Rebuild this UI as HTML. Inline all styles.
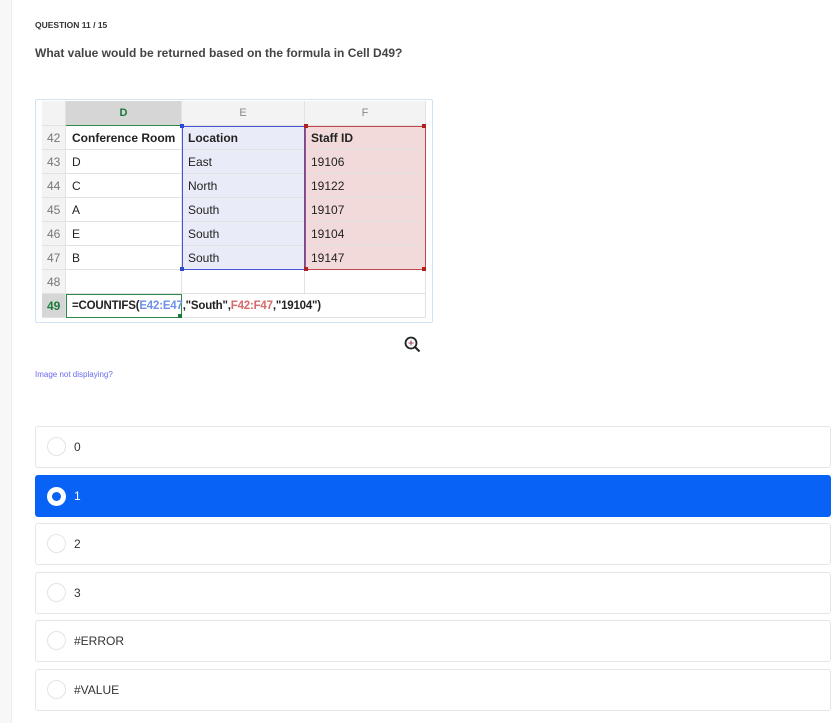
<!DOCTYPE html>
<html><head><style>
body{margin:0;width:840px;height:723px;background:#fff;font-family:"Liberation Sans",Arial,sans-serif;position:relative;overflow:hidden}
.strip{position:absolute;left:0;top:0;width:11px;height:723px;background:#f7f7f7;border-right:1px solid #ececec}
.a{position:absolute}
.q{left:35px;top:20px;font-size:8.5px;font-weight:bold;color:#333}
.t{left:35px;top:46px;font-size:12px;font-weight:bold;color:#444}
.img{left:35px;top:99px;width:396px;height:222px;border:1px solid #cfe3f5;border-radius:2px}
.ss{left:42px;top:101px;width:384px;height:217px;font-size:12px;color:#222}
.cell{position:absolute;box-sizing:border-box;border-right:1px solid #e2e2e2;border-bottom:1px solid #e2e2e2;padding-left:6px;line-height:25px}
.rn{color:#777;padding-left:5px;background:#f3f3f3}
.hd{background:#f3f3f3;color:#888;text-align:center;padding:0;font-size:11px;line-height:24px}
.opt{position:absolute;left:35px;width:794px;height:40px;border:1px solid #e6e6e6;border-radius:3px;box-sizing:content-box}
.opt .c{position:absolute;left:11px;top:10px;width:17px;height:17px;border:1px solid #e4e4e4;border-radius:50%}
.opt span{position:absolute;left:38px;top:13px;font-size:12px;color:#333}
.sel{background:#0862f6;border-color:#0862f6}
.sel .c{background:#fff;border:none;width:19px;height:19px;left:11px;top:11px}
.sel .c:after{content:"";position:absolute;left:5px;top:5px;width:9px;height:9px;border-radius:50%;background:#0862f6}
.sel span{color:#fff}
</style></head><body>
<div class="strip"></div>
<div class="a q">QUESTION 11 / 15</div>
<div class="a t">What value would be returned based on the formula in Cell D49?</div>
<div class="a img"></div>
<div class="a ss">
 <div class="cell hd" style="left:0;top:0;width:24px;height:25px"></div>
 <div class="cell hd" style="left:24px;top:0;width:116px;height:25px;background:#d6d6d6;color:#1a7a3a;font-weight:bold;border-bottom:1px solid #2a8a4a">D</div>
 <div class="cell hd" style="left:140px;top:0;width:123px;height:25px">E</div>
 <div class="cell hd" style="left:263px;top:0;width:121px;height:25px">F</div>
 <div class="a" style="left:140px;top:25px;width:123px;height:144px;background:#e9ecf8"></div>
 <div class="a" style="left:263px;top:25px;width:121px;height:144px;background:#f2dada"></div>
 <div class="cell rn" style="left:0;top:25px;width:24px;height:24px">42</div>
 <div class="cell" style="left:24px;top:25px;width:116px;height:24px;font-weight:bold">Conference Room</div>
 <div class="cell" style="left:140px;top:25px;width:123px;height:24px;font-weight:bold">Location</div>
 <div class="cell" style="left:263px;top:25px;width:121px;height:24px;font-weight:bold">Staff ID</div>
 <div class="cell rn" style="left:0;top:49px;width:24px;height:24px">43</div>
 <div class="cell" style="left:24px;top:49px;width:116px;height:24px">D</div>
 <div class="cell" style="left:140px;top:49px;width:123px;height:24px">East</div>
 <div class="cell" style="left:263px;top:49px;width:121px;height:24px">19106</div>
 <div class="cell rn" style="left:0;top:73px;width:24px;height:24px">44</div>
 <div class="cell" style="left:24px;top:73px;width:116px;height:24px">C</div>
 <div class="cell" style="left:140px;top:73px;width:123px;height:24px">North</div>
 <div class="cell" style="left:263px;top:73px;width:121px;height:24px">19122</div>
 <div class="cell rn" style="left:0;top:97px;width:24px;height:24px">45</div>
 <div class="cell" style="left:24px;top:97px;width:116px;height:24px">A</div>
 <div class="cell" style="left:140px;top:97px;width:123px;height:24px">South</div>
 <div class="cell" style="left:263px;top:97px;width:121px;height:24px">19107</div>
 <div class="cell rn" style="left:0;top:121px;width:24px;height:24px">46</div>
 <div class="cell" style="left:24px;top:121px;width:116px;height:24px">E</div>
 <div class="cell" style="left:140px;top:121px;width:123px;height:24px">South</div>
 <div class="cell" style="left:263px;top:121px;width:121px;height:24px">19104</div>
 <div class="cell rn" style="left:0;top:145px;width:24px;height:24px">47</div>
 <div class="cell" style="left:24px;top:145px;width:116px;height:24px">B</div>
 <div class="cell" style="left:140px;top:145px;width:123px;height:24px">South</div>
 <div class="cell" style="left:263px;top:145px;width:121px;height:24px">19147</div>
 <div class="cell rn" style="left:0;top:169px;width:24px;height:24px">48</div>
 <div class="cell" style="left:24px;top:169px;width:116px;height:24px"></div>
 <div class="cell" style="left:140px;top:169px;width:123px;height:24px"></div>
 <div class="cell" style="left:263px;top:169px;width:121px;height:24px"></div>
 <div class="cell rn" style="left:0;top:193px;width:24px;height:24px;background:#d6d6d6;color:#1a7a3a;font-weight:bold">49</div>
 <div class="cell" style="left:24px;top:193px;width:360px;height:24px"></div>
 <div class="a" style="left:24px;top:193px;width:114px;height:22px;border:1px solid #2a8a4a"></div>
 <div class="a" style="left:30px;top:193px;line-height:24px;font-weight:bold;white-space:nowrap;font-size:11.5px;letter-spacing:-0.2px">=COUNTIFS(<span style="color:#6f8fe8">E42:E47</span>,"South",<span style="color:#d46a6a">F42:F47</span>,"19104")</div>
 <div class="a" style="left:140px;top:25px;width:121px;height:142px;border:1px solid #4656d0"></div>
 <div class="a" style="left:263px;top:25px;width:119px;height:142px;border:1px solid #c04848"></div>
 <div class="a" style="left:138px;top:23px;width:4px;height:4px;background:#2a4ad0"></div>
 <div class="a" style="left:138px;top:166px;width:4px;height:4px;background:#2a4ad0"></div>
 <div class="a" style="left:262px;top:23px;width:4px;height:4px;background:#b02020"></div>
 <div class="a" style="left:380px;top:23px;width:4px;height:4px;background:#b02020"></div>
 <div class="a" style="left:262px;top:166px;width:4px;height:4px;background:#b02020"></div>
 <div class="a" style="left:380px;top:166px;width:4px;height:4px;background:#b02020"></div>
 <div class="a" style="left:136px;top:213px;width:4px;height:4px;background:#1a7a3a"></div>
</div>
<svg class="a" style="left:403px;top:335px" width="20" height="20" viewBox="0 0 20 20"><circle cx="8" cy="8" r="5.5" fill="none" stroke="#222" stroke-width="1.8"/><path d="M12 12l4.5 4.5" stroke="#222" stroke-width="2"/><path d="M8 5.5v5M5.5 8h5" stroke="#a04060" stroke-width="1"/></svg>
<div class="a" style="left:35px;top:370px;font-size:8px;color:#6a6af0">Image not displaying?</div>
<div class="opt" style="top:426px"><div class="c"></div><span>0</span></div>
<div class="opt sel" style="top:475px"><div class="c"></div><span>1</span></div>
<div class="opt" style="top:523px"><div class="c"></div><span>2</span></div>
<div class="opt" style="top:572px"><div class="c"></div><span>3</span></div>
<div class="opt" style="top:620px"><div class="c"></div><span>#ERROR</span></div>
<div class="opt" style="top:669px"><div class="c"></div><span>#VALUE</span></div>
</body></html>
